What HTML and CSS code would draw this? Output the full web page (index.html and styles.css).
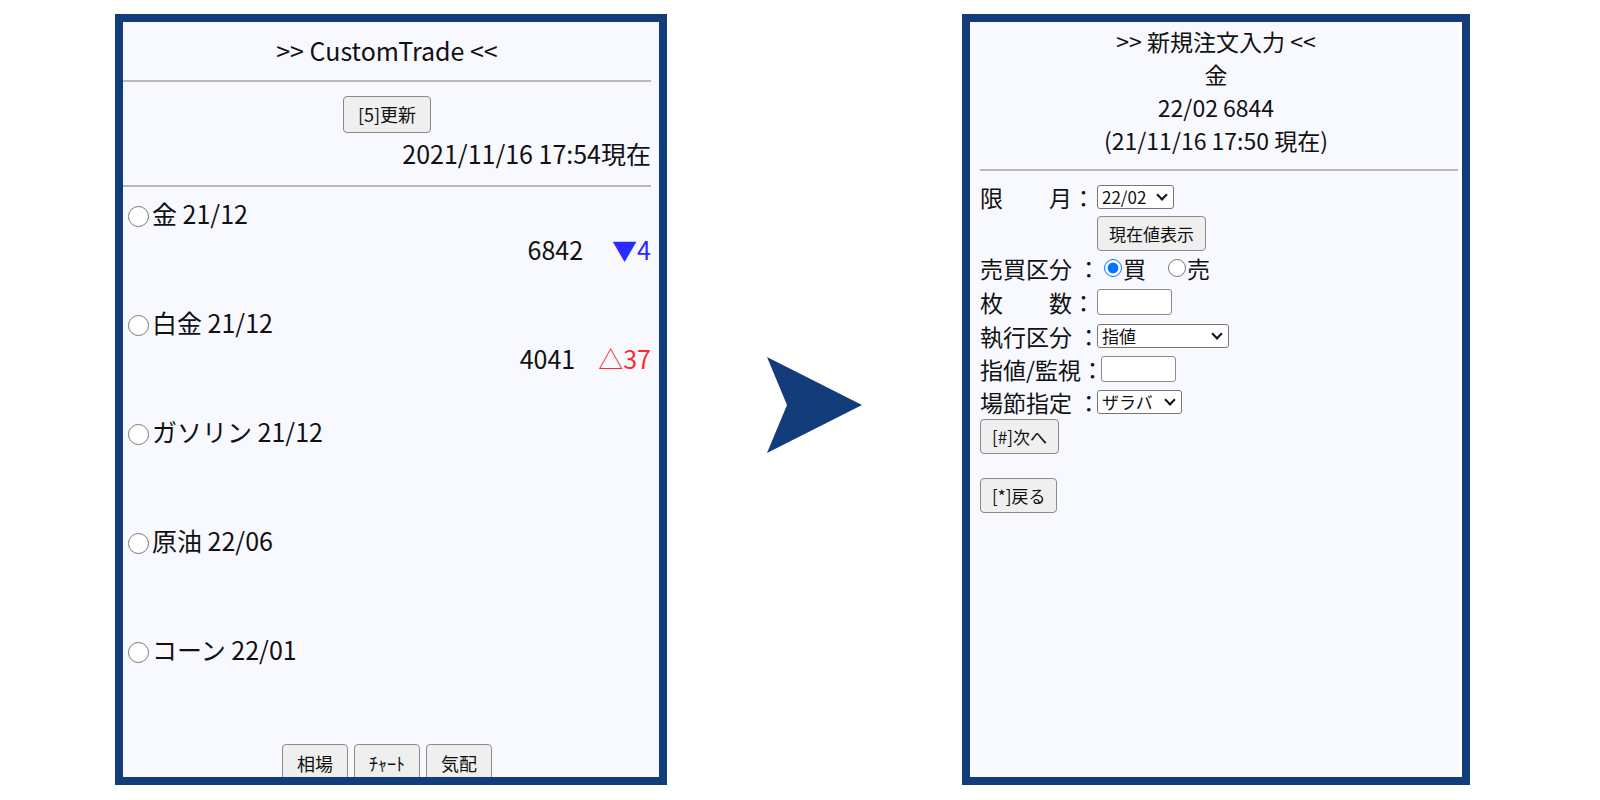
FILE: index.html
```html
<!doctype html>
<html lang="ja">
  <head>
    <meta charset="utf-8">
    <title>CustomTrade 新規注文入力</title>
    <link rel="stylesheet" href="styles.css">
  </head>
  <body>
    <div class="stage">

      <!-- quote list screen -->
      <div class="phone phone-list">
        <div class="title">&gt;&gt; CustomTrade &lt;&lt;</div>
        <hr>
        <div class="refresh">
          <button>[5]更新</button>
          <div class="stamp">2021/11/16 17:54現在</div>
        </div>
        <hr>
        <ul class="quotes">
          <li>
            <label><input type="radio" name="item">金 21/12</label>
            <div class="price">6842<span class="chg down">▼4</span></div>
          </li>
          <li>
            <label><input type="radio" name="item">白金 21/12</label>
            <div class="price">4041<span class="chg up">△37</span></div>
          </li>
          <li>
            <label><input type="radio" name="item">ガソリン 21/12</label>
            <div class="price"></div>
          </li>
          <li>
            <label><input type="radio" name="item">原油 22/06</label>
            <div class="price"></div>
          </li>
          <li>
            <label><input type="radio" name="item">コーン 22/01</label>
            <div class="price"></div>
          </li>
        </ul>
        <div class="menu">
          <button>相場</button>
          <button>ﾁｬｰﾄ</button>
          <button>気配</button>
        </div>
      </div>

      <svg class="arrow" width="95" height="96" viewBox="0 0 95 96">
        <path d="M0 0 L95 48 L0 96 L20 48 Z" fill="#133c7a"/>
      </svg>

      <!-- new order screen -->
      <div class="phone phone-order">
        <div class="order-head">
          <div>&gt;&gt; 新規注文入力 &lt;&lt;</div>
          <div>金</div>
          <div>22/02 6844</div>
          <div>(21/11/16 17:50 現在)</div>
        </div>
        <hr>
        <form class="form">
          <div class="row">
            <span class="lbl">限　　月：</span>
            <span class="sel"><select class="sel-month"><option>22/02</option><option>22/04</option></select></span>
          </div>
          <div class="row-btn"><button type="button">現在値表示</button></div>
          <div class="row">
            <span class="lbl">売買区分 ：</span>
            <label class="opt"><input type="radio" name="side" checked>買</label>
            <label class="opt"><input type="radio" name="side">売</label>
          </div>
          <div class="row">
            <span class="lbl">枚　　数：</span>
            <input type="text" class="num">
          </div>
          <div class="row">
            <span class="lbl">執行区分 ：</span>
            <span class="sel"><select class="sel-type"><option>指値</option><option>成行</option><option>逆指値</option></select></span>
          </div>
          <div class="row row-tight">
            <span class="lbl">指値/監視：</span>
            <input type="text" class="num limit">
          </div>
          <div class="row">
            <span class="lbl">場節指定 ：</span>
            <span class="sel"><select class="sel-session"><option>ザラバ</option><option>寄付</option></select></span>
          </div>
          <button type="button" class="next">[#]次へ</button>
          <button type="button" class="back">[*]戻る</button>
        </form>
      </div>

    </div>
  </body>
</html>
```

FILE: styles.css
```css
* {
  box-sizing: border-box;
}

body {
  margin: 0;
  background: #fff;
}

.stage {
  display: flex;
  align-items: flex-start;
  gap: 100px;
  padding: 14px 0 0 115px;
}

/* The two phone screens */
.phone {
  height: 771px;
  border: 8px solid #133c7a;
  background: #f8f8ff;
  overflow: hidden;
  font-family: "Noto Sans CJK JP", "Noto Sans", sans-serif;
  color: #111;
}

.phone hr {
  border: 0;
  border-top: 2px solid #b9b9b9;
  margin: 0;
}

.phone button {
  font-family: inherit;
  font-size: 18px;
  line-height: 1;
  height: 37px;
  padding: 0 14px;
  color: #111;
  background: #efefef;
  border: 1px solid #8a8a8a;
  border-radius: 4px;
}

.arrow {
  margin-top: 343px;
  flex: none;
}

/* Quote list */
.phone-list {
  width: 552px;
  font-size: 25px;
  padding-right: 8px;
}

.title {
  text-align: center;
  line-height: 36px;
  padding: 10px 0 12px;
}

.refresh {
  text-align: center;
  padding: 11px 0 14px;
}

.stamp {
  text-align: right;
  line-height: 36px;
  margin-top: 2px;
}

.quotes {
  list-style: none;
  margin: 0;
  padding: 8px 0 0;
}

.quotes li {
  height: 109.2px;
  line-height: 36px;
}

.quotes input {
  width: 21px;
  height: 21px;
  margin: 0 3px 0 5px;
  vertical-align: -3px;
}

.price {
  text-align: right;
  height: 36px;
}

.chg {
  margin-left: 29px;
}
.chg.down {
  color: #2a2aff;
}
.chg.up {
  margin-left: 23px;
  color: #ff2b2b;
}

.menu {
  display: flex;
  justify-content: center;
  gap: 6px;
  padding-top: 4px;
}

/* Order form */
.phone-order {
  width: 508px;
  font-size: 23px;
  box-shadow: inset -4px 0 #fff;
}

.order-head {
  text-align: center;
  line-height: 33px;
  padding-top: 3px;
}

.phone-order hr {
  margin: 12px 4px 0 10px;
}

.form {
  padding: 9px 0 0 10px;
}

.row {
  display: flex;
  align-items: center;
  height: 34px;
}
.row-tight {
  height: 32px;
}

.lbl {
  width: 117px;
  flex: none;
  white-space: pre;
}

.row-btn {
  padding-left: 117px;
}

.phone-order button {
  font-size: 17px;
  height: 35px;
  padding: 0 11px;
}

/* selects with a bold chevron */
.sel {
  position: relative;
  display: inline-block;
  height: 24px;
}
.sel::after {
  content: "";
  position: absolute;
  right: 8px;
  top: 6px;
  width: 6px;
  height: 6px;
  border-right: 2.5px solid #111;
  border-bottom: 2.5px solid #111;
  transform: rotate(45deg);
  pointer-events: none;
}

.phone-order .sel select {
  appearance: none;
  display: block;
  font-family: "Noto Sans CJK JP", sans-serif;
  font-size: 17px;
  line-height: 22px;
  height: 24px;
  padding: 0 2px 0 4px;
  color: #111;
  background: #fff;
  border: 1px solid #767676;
  border-radius: 3px;
}

.sel-month {
  width: 77px;
}
.sel-type {
  width: 132px;
}
.sel-session {
  width: 85px;
}

.num {
  width: 75px;
  height: 26px;
  background: #fff;
  border: 1px solid #8a8a8a;
  border-radius: 3px;
}
.limit {
  margin-left: 4px;
}

.opt {
  display: flex;
  align-items: center;
}
.opt input {
  width: 18px;
  height: 18px;
  margin: 0 1px 0 7px;
}
.opt + .opt {
  margin-left: 15px;
}

.form .next {
  display: block;
}
.form .back {
  display: block;
  margin-top: 24px;
}
```
